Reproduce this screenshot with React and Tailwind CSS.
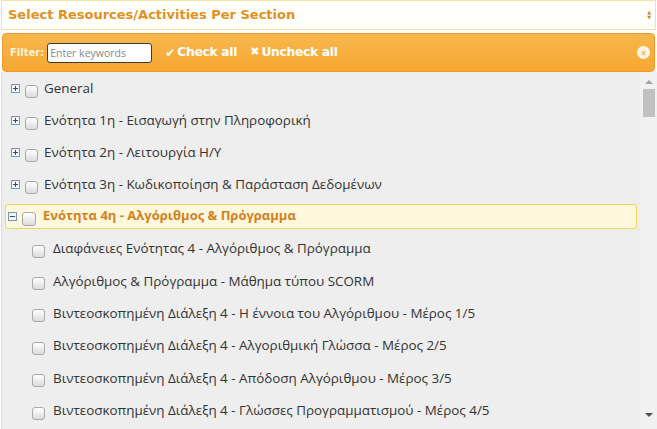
import React from "react";

const sections = [
  { title: "General" },
  { title: "Ενότητα 1η - Εισαγωγή στην Πληροφορική" },
  { title: "Ενότητα 2η - Λειτουργία Η/Υ" },
  { title: "Ενότητα 3η - Κωδικοποίηση & Παράσταση Δεδομένων" },
];

const items = [
  "Διαφάνειες Ενότητας 4 - Αλγόριθμος & Πρόγραμμα",
  "Αλγόριθμος & Πρόγραμμα - Μάθημα τύπου SCORM",
  "Βιντεοσκοπημένη Διάλεξη 4 - Η έννοια του Αλγόριθμου - Μέρος 1/5",
  "Βιντεοσκοπημένη Διάλεξη 4 - Αλγοριθμική Γλώσσα - Μέρος 2/5",
  "Βιντεοσκοπημένη Διάλεξη 4 - Απόδοση Αλγόριθμου - Μέρος 3/5",
  "Βιντεοσκοπημένη Διάλεξη 4 - Γλώσσες Προγραμματισμού - Μέρος 4/5",
];

function Checkbox({ big }) {
  return (
    <span
      className={`inline-block shrink-0 translate-y-[3px] rounded-[3px] border border-[#a9a9a9] bg-gradient-to-b from-white to-[#dcdcdc] ${
        big ? "w-[14px] h-[14px]" : "w-[13px] h-[13px]"
      }`}
    />
  );
}

function Toggle({ open }) {
  return (
    <span className="relative inline-block w-[9px] h-[9px] shrink-0 border border-[#7f93b5] bg-[#f4f6fb]">
      <span className="absolute left-[1px] top-[3px] w-[5px] h-[1px] bg-[#2b4a8a]" />
      {!open && (
        <span className="absolute left-[3px] top-[1px] w-[1px] h-[5px] bg-[#2b4a8a]" />
      )}
    </span>
  );
}

export default function App() {
  return (
    <div
      className="w-[657px] h-[429px] overflow-hidden bg-white flex flex-col"
      style={{ fontFamily: "'Open Sans', 'DejaVu Sans', sans-serif" }}
    >
      {/* select header */}
      <div className="h-[30px] mx-[1px] shrink-0 flex items-center justify-between border border-[#f2e3a4] bg-[#fffffb] pl-[6px] pr-[4px]">
        <span className="text-[13px] font-bold text-[#e38f22]" style={{ fontFamily: "'DejaVu Sans', sans-serif" }}>
          Select Resources/Activities Per Section
        </span>
        <span className="flex flex-col items-center leading-none text-[#d0892a]">
          <span className="text-[5px]">▲</span>
          <span className="text-[5px]">▼</span>
        </span>
      </div>

      {/* filter bar */}
      <div className="mx-[2px] mt-[3px] h-[39px] shrink-0 flex items-center rounded-[4px] border border-[#ec9a2f] bg-gradient-to-b from-[#f8b74c] to-[#f6a731] pl-[7px] pr-[4px]">
        <span className="text-[10px] font-bold text-[#fdf3df]" style={{ fontFamily: "'DejaVu Sans', sans-serif" }}>
          Filter:
        </span>
        <input
          className="ml-[3px] w-[105px] h-[20px] rounded-[3px] border border-[#3a3a3a] bg-white px-[2px] text-[10.5px] text-[#777] outline-none placeholder:text-[#888]"
          placeholder="Enter keywords"
        />
        <span className="ml-[13px] flex items-center text-white font-bold text-[12.3px]" style={{ fontFamily: "'DejaVu Sans', sans-serif" }}>
          <span className="text-[12px] mr-[2px]">✔</span>
          <span className="tracking-[-0.3px]">Check all</span>
        </span>
        <span className="ml-[13px] flex items-center text-white font-bold text-[12.3px]" style={{ fontFamily: "'DejaVu Sans', sans-serif" }}>
          <span className="text-[11px] mr-[2px]">✖</span>
          <span className="tracking-[-0.3px]">Uncheck all</span>
        </span>
        <span className="ml-auto w-[13px] h-[13px] rounded-full bg-[#fff6e8] flex items-center justify-center text-[8px] font-bold text-[#f1a43b] leading-none">
          ✕
        </span>
      </div>

      {/* list */}
      <div className="flex-1 flex bg-[#eeeeee] border-l border-[#dcdcdc] ml-[1px]">
        <div className="flex-1 text-[13.4px] text-[#333333]">
          {sections.map((s) => (
            <div key={s.title} className="h-[32px] flex items-center pl-[9px]">
              <Toggle />
              <span className="ml-[5px] flex">
                <Checkbox />
              </span>
              <span className="ml-[6px]">{s.title}</span>
            </div>
          ))}
          <div className="h-[32px] flex items-center pl-[3px] pr-[3px]">
            <div className="flex-1 h-[25px] flex items-center rounded-[3px] border border-[#f2d65f] bg-[#fff8dd] pl-[2px]">
              <Toggle open />
              <span className="ml-[5px] flex">
                <Checkbox big />
              </span>
              <span className="ml-[7px] font-bold text-[#d3801e] text-[13px]">
                Ενότητα 4η - Αλγόριθμος & Πρόγραμμα
              </span>
            </div>
          </div>
          {items.map((t) => (
            <div key={t} className="h-[32.4px] flex items-center pl-[30px]">
              <span className="flex">
                <Checkbox />
              </span>
              <span className="ml-[8px]">{t}</span>
            </div>
          ))}
        </div>

        {/* scrollbar */}
        <div className="w-[17px] shrink-0 bg-[#f1f1f1] flex flex-col items-center">
          <span className="mt-[8px] w-0 h-0 border-l-[4px] border-r-[4px] border-b-[4px] border-l-transparent border-r-transparent border-b-[#a3a3a3]" />
          <span className="mt-[5px] w-[12px] h-[28px] bg-[#c1c1c1]" />
          <span className="mt-auto mb-[12px] w-0 h-0 border-l-[4px] border-r-[4px] border-t-[4px] border-l-transparent border-r-transparent border-t-[#505050]" />
        </div>
      </div>
    </div>
  );
}
